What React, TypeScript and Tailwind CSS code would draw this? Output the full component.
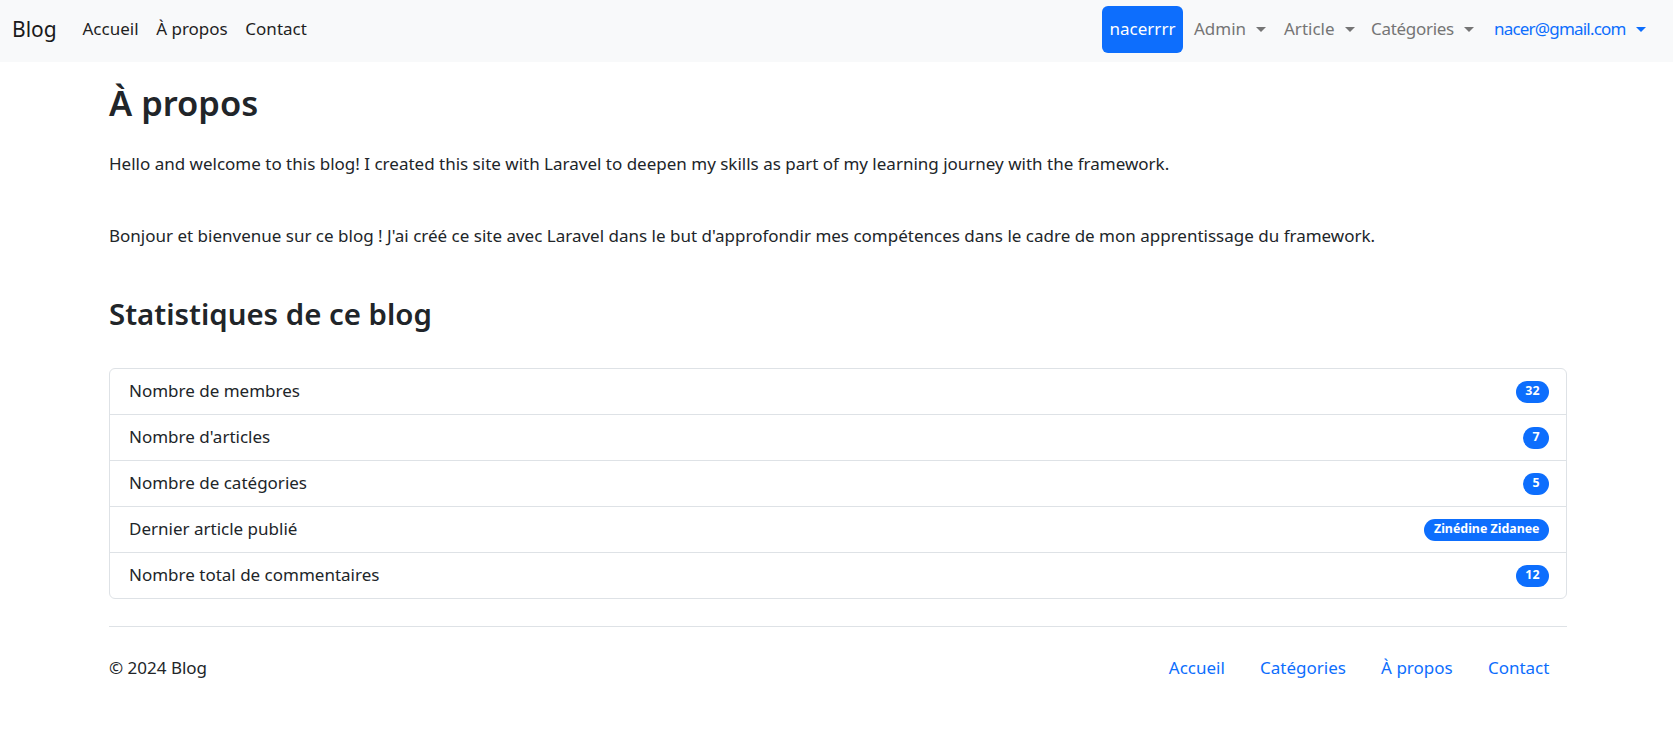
import React from "react";

const Caret = ({ color }: { color: string }) => (
  <span
    className="inline-block ml-[10px] shrink-0"
    style={{ width: 0, height: 0, borderLeft: "5px solid transparent", borderRight: "5px solid transparent", borderTop: `5.5px solid ${color}` }}
  />
);

const stats: [string, string][] = [
  ["Nombre de membres", "32"],
  ["Nombre d'articles", "7"],
  ["Nombre de catégories", "5"],
  ["Dernier article publié", "Zinédine Zidanee"],
  ["Nombre total de commentaires", "12"],
];

export default function App() {
  return (
    <div className="min-h-screen bg-white text-[#212529] text-[17px] leading-[26.4px]" style={{ fontFamily: '"Noto Sans", "Open Sans", sans-serif' }}>
      <nav className="h-[62px] bg-[#f8f9fa] flex items-center pl-[12px] pr-[32px] pb-[3px]">
        <span className="text-[21px] text-[#1a1a1a] mr-[17px]">Blog</span>
        <div className="flex items-center">
          <a className="px-[8.8px] text-[#1f1f1f]">Accueil</a>
          <a className="px-[8.8px] text-[#1f1f1f]">À propos</a>
          <a className="px-[8.8px] text-[#1f1f1f]">Contact</a>
        </div>
        <div className="ml-auto flex items-center">
          <button className="h-[47px] w-[81px] bg-[#0d6efd] text-white rounded-[6px] mr-[11px]">nacerrrr</button>
          <a className="w-[90px] text-[#757575] flex items-center">Admin<Caret color="#757575" /></a>
          <a className="w-[87px] text-[#757575] flex items-center">Article<Caret color="#757575" /></a>
          <a className="w-[123px] text-[#757575] flex items-center tracking-[-0.3px]">Catégories<Caret color="#757575" /></a>
          <a className="w-[147px] text-[#0d6efd] flex items-center tracking-[-0.8px]">nacer@gmail.com<Caret color="#0d6efd" /></a>
        </div>
      </nav>

      <main className="ml-[109px] w-[1458px]">
        <h1 className="mt-[20px] text-[34.5px] leading-[42px] font-semibold text-[#212529]">À propos</h1>
        <p className="mt-[27px]">Hello and welcome to this blog! I created this site with Laravel to deepen my skills as part of my learning journey with the framework.</p>
        <p className="mt-[45.6px]">Bonjour et bienvenue sur ce blog ! J'ai créé ce site avec Laravel dans le but d'approfondir mes compétences dans le cadre de mon apprentissage du framework.</p>
        <h2 className="mt-[46.6px] text-[29.4px] leading-[37px] font-semibold text-[#212529]">Statistiques de ce blog</h2>

        <ul className="mt-[35px] border border-[#dee2e6] rounded-[6px]">
          {stats.map(([label, value], i) => (
            <li
              key={label}
              className={`flex items-center justify-between pl-[19px] pr-[17px] ${i > 0 ? "border-t border-[#dee2e6] h-[46px]" : "h-[45px]"}`}
            >
              <span>{label}</span>
              <span className="bg-[#0d6efd] text-white font-bold text-[12.4px] leading-none rounded-full h-[22px] px-[9.5px] flex items-center">{value}</span>
            </li>
          ))}
        </ul>

        <footer className="mt-[27px] border-t border-[#dee2e6] flex items-center justify-between pt-[19px] pb-[17.6px]">
          <span>© 2024 Blog</span>
          <div className="flex items-center">
            <a className="px-[17.6px] py-[8.8px] text-[#0d6efd]">Accueil</a>
            <a className="px-[17.6px] py-[8.8px] text-[#0d6efd]">Catégories</a>
            <a className="px-[17.6px] py-[8.8px] text-[#0d6efd]">À propos</a>
            <a className="px-[17.6px] py-[8.8px] text-[#0d6efd]">Contact</a>
          </div>
        </footer>
      </main>
    </div>
  );
}
